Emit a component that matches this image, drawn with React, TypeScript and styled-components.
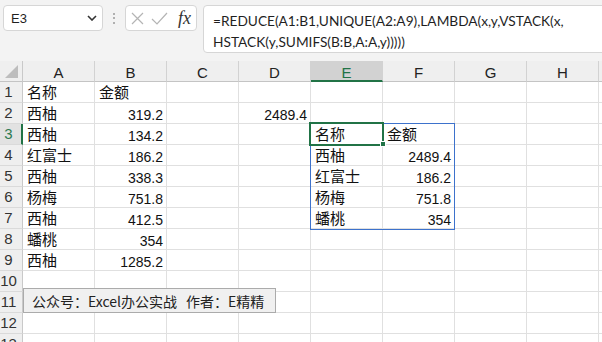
import React from 'react';
import styled, { createGlobalStyle } from 'styled-components';

const GlobalStyle = createGlobalStyle`
  html, body { margin: 0; padding: 0; background: #f3f3f3; overflow: hidden; }
  #root { width: 602px; height: 342px; overflow: hidden; }
`;

const Page = styled.div`
  width: 602px;
  height: 342px;
  display: flex;
  flex-direction: column;
  background: #f3f3f3;
  font-family: "Liberation Sans", "Noto Sans CJK SC", sans-serif;
  color: #222;
  overflow: hidden;
`;

const Toolbar = styled.div`
  height: 61px;
  box-sizing: border-box;
  padding: 5px 0 0 3px;
  display: flex;
  align-items: flex-start;
  flex-shrink: 0;
`;

const NameBox = styled.div`
  width: 100px;
  height: 26px;
  box-sizing: border-box;
  background: #fff;
  border: 1px solid #d6d6d6;
  border-radius: 4px;
  display: flex;
  align-items: center;
  justify-content: space-between;
  padding: 0 5px 0 7px;
  font-size: 13px;
  color: #1f1f1f;
`;

const Grip = styled.div`
  width: 22px;
  height: 26px;
  display: flex;
  flex-direction: column;
  align-items: center;
  justify-content: center;
  gap: 2.5px;
`;

const GripDot = styled.span`
  width: 2px;
  height: 2px;
  background: #9a9a9a;
  border-radius: 1px;
`;

const FxBox = styled.div`
  width: 72px;
  height: 26px;
  box-sizing: border-box;
  background: #fff;
  border: 1px solid #d6d6d6;
  border-radius: 4px;
  display: flex;
  align-items: center;
  padding: 0 0 0 5px;
  gap: 7px;
`;

const FxLabel = styled.span`
  font-family: "Liberation Serif", serif;
  font-style: italic;
  font-size: 18px;
  color: #333;
  margin-left: 3px;
  line-height: 1;
`;

const FormulaBox = styled.div`
  flex: 1;
  margin-left: 6px;
  margin-right: -6px;
  height: 48px;
  box-sizing: border-box;
  background: #fff;
  border: 1px solid #d6d6d6;
  border-radius: 4px;
  padding: 4px 0 0 9px;
  font-family: "Lato", "Liberation Sans", sans-serif;
  font-size: 13.7px;
  line-height: 21px;
  white-space: nowrap;
  color: #1f1f1f;
`;

const Sheet = styled.div`
  position: relative;
  display: grid;
  grid-template-columns: 23px repeat(9, 72px);
  grid-auto-rows: 21px;
  background: #fff;
`;

const Corner = styled.div`
  background: #efefef;
  border-right: 1px solid #c9c9c9;
  border-bottom: 1px solid #c4c4c4;
  box-sizing: border-box;
  position: relative;
`;

const CornerTriangle = styled.svg`
  position: absolute;
  left: 5px;
  top: 4px;
`;

const ColHeader = styled.div<{ $active?: boolean }>`
  box-sizing: border-box;
  background: ${(p) => (p.$active ? '#d2d2d2' : '#efefef')};
  border-right: 1px solid #d2d2d2;
  border-bottom: ${(p) => (p.$active ? '2px solid #217346' : '1px solid #c4c4c4')};
  color: ${(p) => (p.$active ? '#217346' : '#222')};
  font-size: 15px;
  text-align: center;
  line-height: 21px;
  padding-top: 1px;
  overflow: hidden;
`;

const RowHeader = styled.div<{ $active?: boolean }>`
  box-sizing: border-box;
  background: ${(p) => (p.$active ? '#e2e2e2' : '#efefef')};
  border-right: ${(p) => (p.$active ? '2px solid #217346' : '1px solid #c9c9c9')};
  border-bottom: 1px solid #dadada;
  color: ${(p) => (p.$active ? '#2e7a52' : '#333')};
  font-size: 15px;
  text-align: center;
  padding-right: ${(p) => (p.$active ? 4 : 5)}px;
  line-height: 20px;
  overflow: hidden;
`;

const Cell = styled.div<{ $num?: boolean }>`
  box-sizing: border-box;
  border-right: 1px solid #e0e0e0;
  border-bottom: 1px solid #e0e0e0;
  white-space: nowrap;
  color: #111;
  text-align: ${(p) => (p.$num ? 'right' : 'left')};
  padding: ${(p) => (p.$num ? '2px 3px 0 0' : '0 0 0 4px')};
  font-family: ${(p) => (p.$num ? '"Liberation Sans", sans-serif' : '"Noto Sans CJK SC", sans-serif')};
  font-size: ${(p) => (p.$num ? 14 : 15)}px;
  line-height: 20px;
`;

const SpillBorder = styled.div`
  position: absolute;
  left: 310px;
  top: 62px;
  width: 145px;
  height: 107px;
  box-sizing: border-box;
  border: 1px solid #3d72cc;
  pointer-events: none;
`;

const ActiveCell = styled.div`
  position: absolute;
  left: 309px;
  top: 61px;
  width: 75px;
  height: 24px;
  box-sizing: border-box;
  border: 2px solid #217346;
  pointer-events: none;
`;

const FillHandle = styled.div`
  position: absolute;
  left: 380px;
  top: 80px;
  width: 6px;
  height: 6px;
  box-sizing: border-box;
  background: #217346;
  border: 1px solid #fff;
`;

const TextBox = styled.div`
  position: absolute;
  left: 23px;
  top: 227px;
  width: 253px;
  height: 25px;
  box-sizing: border-box;
  background: #f0f0f0;
  border: 1px solid #ababab;
  display: flex;
  align-items: center;
  padding-left: 8px;
  font-family: "Noto Sans CJK SC", sans-serif;
  font-size: 14px;
  color: #222;
  white-space: pre;
`;

const Gap = styled.span`
  display: inline-block;
  width: 9px;
`;

type Row = Record<string, string>;

const columns = ['A', 'B', 'C', 'D', 'E', 'F', 'G', 'H', 'I'];

const rows: Row[] = [
  { A: '名称', B: '金额' },
  { A: '西柚', B: '319.2', D: '2489.4' },
  { A: '西柚', B: '134.2', E: '名称', F: '金额' },
  { A: '红富士', B: '186.2', E: '西柚', F: '2489.4' },
  { A: '西柚', B: '338.3', E: '红富士', F: '186.2' },
  { A: '杨梅', B: '751.8', E: '杨梅', F: '751.8' },
  { A: '西柚', B: '412.5', E: '蟠桃', F: '354' },
  { A: '蟠桃', B: '354' },
  { A: '西柚', B: '1285.2' },
  {},
  {},
  {},
  {},
];

const isNum = (v: string) => /^[\d.]+$/.test(v);

export default function App() {
  return (
    <Page>
      <GlobalStyle />
      <Toolbar>
        <NameBox>
          <span>E3</span>
          <svg width="10" height="6" viewBox="0 0 10 6">
            <path d="M1 1 L5 5 L9 1" fill="none" stroke="#333" strokeWidth="1.6" />
          </svg>
        </NameBox>
        <Grip>
          <GripDot />
          <GripDot />
          <GripDot />
        </Grip>
        <FxBox>
          <svg width="13" height="13" viewBox="0 0 13 13">
            <path d="M1 1 L12 12 M12 1 L1 12" stroke="#b4b4b4" strokeWidth="1.2" />
          </svg>
          <svg width="17" height="13" viewBox="0 0 17 13">
            <path d="M1 7 L6 12 L16 1" fill="none" stroke="#b4b4b4" strokeWidth="1.2" />
          </svg>
          <FxLabel>fx</FxLabel>
        </FxBox>
        <FormulaBox>
          =REDUCE(A1:B1,UNIQUE(A2:A9),LAMBDA(x,y,VSTACK(x,
          <br />
          HSTACK(y,SUMIFS(B:B,A:A,y)))))
        </FormulaBox>
      </Toolbar>
      <Sheet>
        <Corner>
          <CornerTriangle width="13" height="13" viewBox="0 0 13 13">
            <path d="M13 0 L13 13 L0 13 Z" fill="#bdbdbd" />
          </CornerTriangle>
        </Corner>
        {columns.map((c) => (
          <ColHeader key={c} $active={c === 'E'}>
            {c}
          </ColHeader>
        ))}
        {rows.map((r, i) => (
          <React.Fragment key={i}>
            <RowHeader $active={i === 2}>{i + 1}</RowHeader>
            {columns.map((c) => {
              const v = r[c] ?? '';
              return (
                <Cell key={c} $num={isNum(v) && v !== ''}>
                  {v}
                </Cell>
              );
            })}
          </React.Fragment>
        ))}
        <SpillBorder />
        <ActiveCell />
        <FillHandle />
        <TextBox>
          公众号：Excel办公实战<Gap />作者：E精精
        </TextBox>
      </Sheet>
    </Page>
  );
}
